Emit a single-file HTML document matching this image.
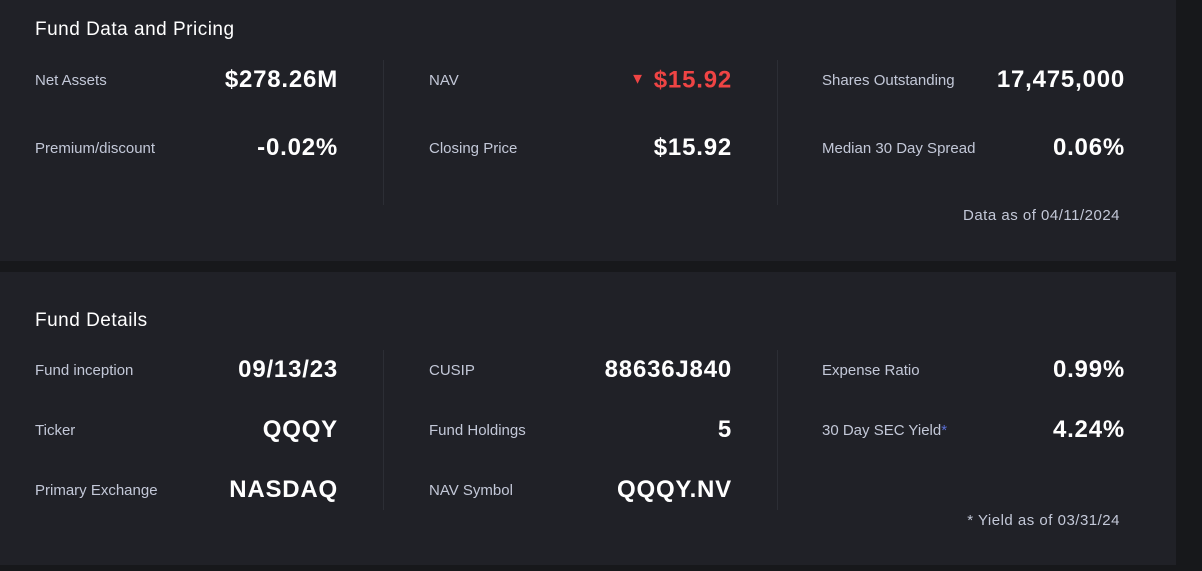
<!DOCTYPE html><html><head><style>
body{margin:0;width:1202px;height:571px;background:#17181b;font-family:"Liberation Sans",sans-serif;position:relative;overflow:hidden}
.card{position:absolute;left:0;width:1176px;background:#202127}
.t{position:absolute;left:35px;color:#fff;font-size:19px;line-height:20px;transform:translateY(-50%);margin-top:2px;letter-spacing:0.5px}
.l{position:absolute;color:#c3c8d8;font-size:15px;line-height:16px;transform:translateY(-50%);margin-top:2px}
.v{position:absolute;color:#fff;font-size:24px;font-weight:bold;line-height:26px;transform:translateY(-50%);text-align:right;width:200px;margin-top:1px;letter-spacing:0.8px}
.d{position:absolute;width:1px;background:#2c2e35}
.n{position:absolute;color:#c3c8d8;font-size:15px;line-height:16px;transform:translateY(-50%);text-align:right;width:300px;margin-top:2px;letter-spacing:0.5px}
</style></head><body>
<div class="card" style="top:0;height:261px">
<div class="t" style="top:28px">Fund Data and Pricing</div>
<div class="l" style="left:35px;top:79px">Net Assets</div><div class="v" style="left:138px;top:79px">$278.26M</div>
<div class="l" style="left:35px;top:147px">Premium/discount</div><div class="v" style="left:138px;top:147px">-0.02%</div>
<div class="d" style="left:383px;top:60px;height:145px"></div>
<div class="l" style="left:429px;top:79px">NAV</div><div class="v" style="left:532px;top:79px;color:#ef4444"><span style="font-size:15px;vertical-align:4px;margin-right:8px">▼</span>$15.92</div>
<div class="l" style="left:429px;top:147px">Closing Price</div><div class="v" style="left:532px;top:147px">$15.92</div>
<div class="d" style="left:777px;top:60px;height:145px"></div>
<div class="l" style="left:822px;top:79px">Shares Outstanding</div><div class="v" style="left:925px;top:79px">17,475,000</div>
<div class="l" style="left:822px;top:147px">Median 30 Day Spread</div><div class="v" style="left:925px;top:147px">0.06%</div>
<div class="n" style="left:820px;top:214px">Data as of 04/11/2024</div>
</div>
<div class="card" style="top:272px;height:293px">
<div class="t" style="top:47px">Fund Details</div>
<div class="l" style="left:35px;top:97px">Fund inception</div><div class="v" style="left:138px;top:97px">09/13/23</div>
<div class="l" style="left:35px;top:157px">Ticker</div><div class="v" style="left:138px;top:157px">QQQY</div>
<div class="l" style="left:35px;top:217px">Primary Exchange</div><div class="v" style="left:138px;top:217px">NASDAQ</div>
<div class="d" style="left:383px;top:78px;height:160px"></div>
<div class="l" style="left:429px;top:97px">CUSIP</div><div class="v" style="left:532px;top:97px">88636J840</div>
<div class="l" style="left:429px;top:157px">Fund Holdings</div><div class="v" style="left:532px;top:157px">5</div>
<div class="l" style="left:429px;top:217px">NAV Symbol</div><div class="v" style="left:532px;top:217px">QQQY.NV</div>
<div class="d" style="left:777px;top:78px;height:160px"></div>
<div class="l" style="left:822px;top:97px">Expense Ratio</div><div class="v" style="left:925px;top:97px">0.99%</div>
<div class="l" style="left:822px;top:157px">30 Day SEC Yield<span style="color:#5b6fd6">*</span></div><div class="v" style="left:925px;top:157px">4.24%</div>
<div class="n" style="left:820px;top:247px">* Yield as of 03/31/24</div>
</div>
</body></html>
